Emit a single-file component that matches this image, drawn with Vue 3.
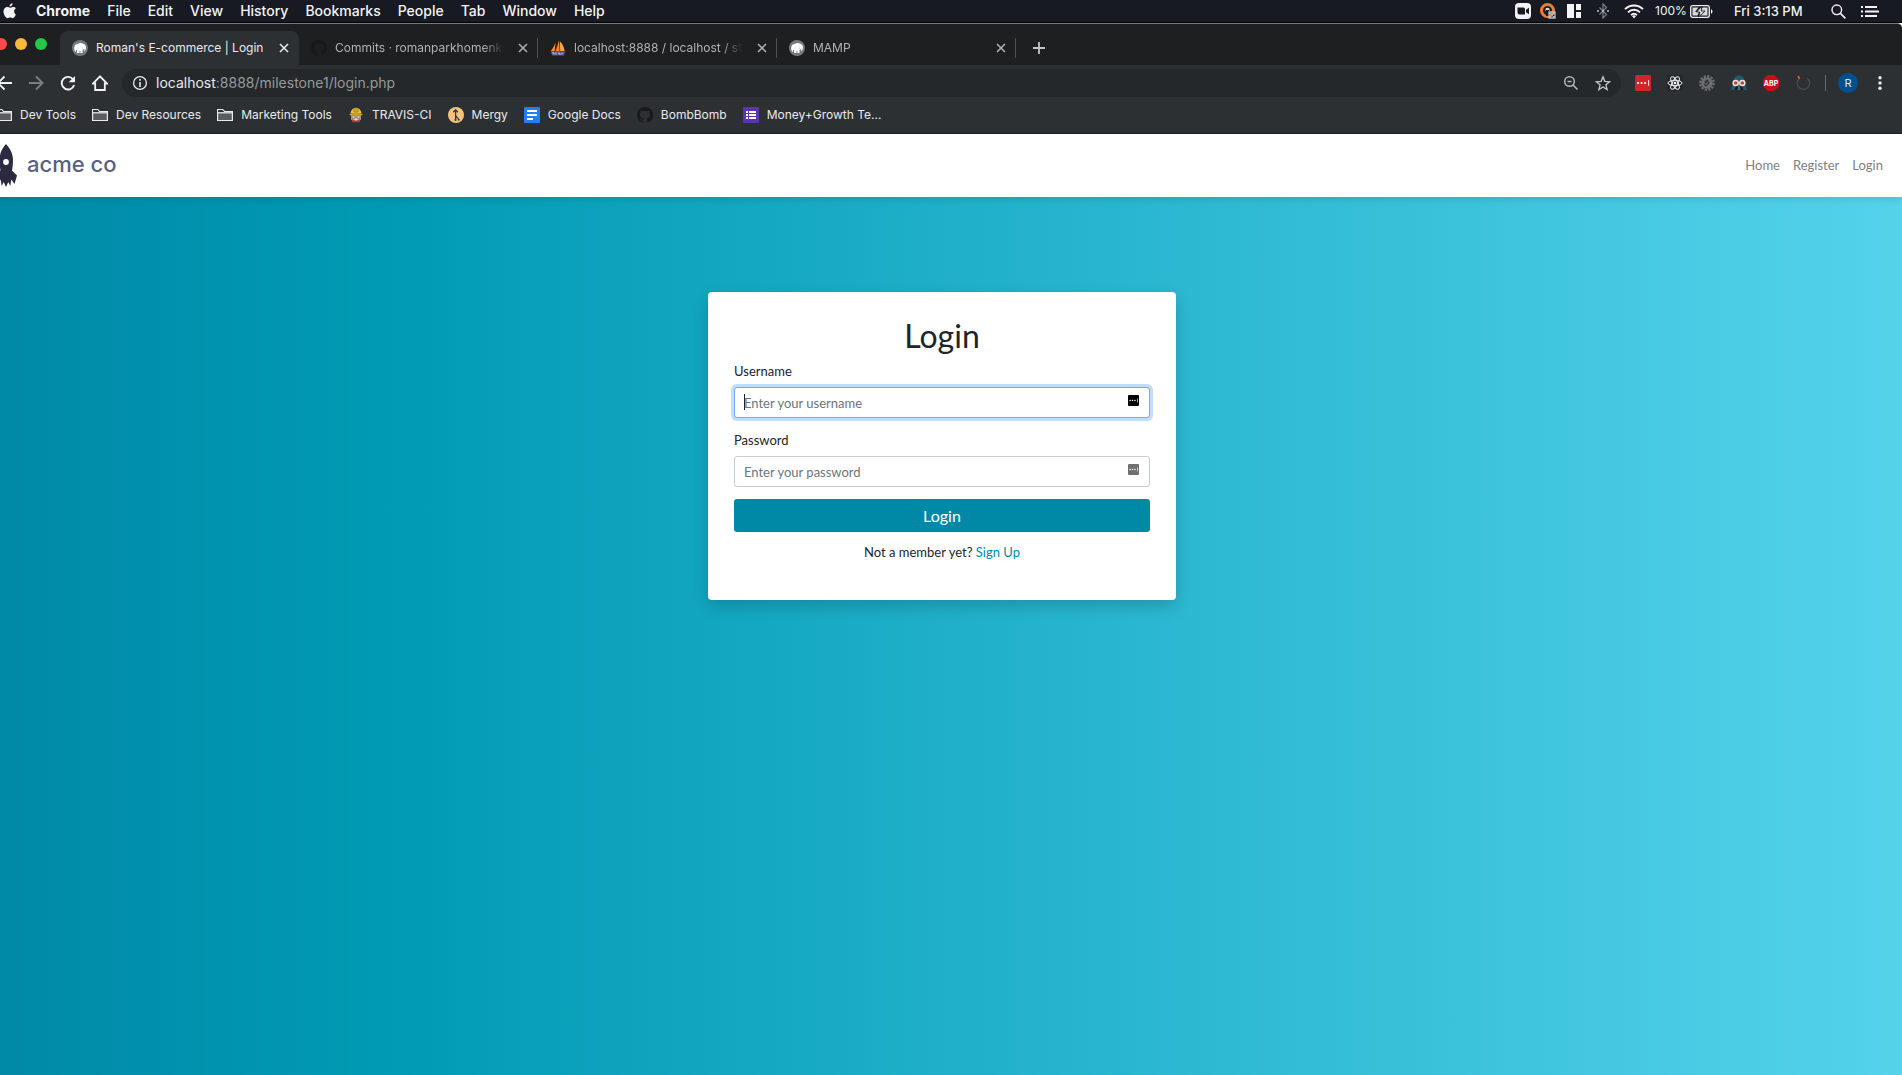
<script setup>
import { ref } from 'vue'

const menus = ['Chrome', 'File', 'Edit', 'View', 'History', 'Bookmarks', 'People', 'Tab', 'Window', 'Help']
const tabs = [
  { title: "Roman's E-commerce | Login", icon: 'mamp', active: true },
  { title: 'Commits · romanparkhomenko/', icon: 'github' },
  { title: 'localhost:8888 / localhost / store', icon: 'pma' },
  { title: 'MAMP', icon: 'mamp' },
]
const bookmarks = [
  { label: 'Dev Tools', icon: 'folder' },
  { label: 'Dev Resources', icon: 'folder' },
  { label: 'Marketing Tools', icon: 'folder' },
  { label: 'TRAVIS-CI', icon: 'travis' },
  { label: 'Mergy', icon: 'mergy' },
  { label: 'Google Docs', icon: 'docs' },
  { label: 'BombBomb', icon: 'github' },
  { label: 'Money+Growth Te...', icon: 'forms' },
]
const username = ref('')
const password = ref('')
</script>

<template>
  <svg class="defs" width="0" height="0" aria-hidden="true">
    <symbol id="i-mamp" viewBox="0 0 16 16">
      <circle cx="8" cy="8" r="8" fill="#77797b" />
      <path d="M2.200 8C2.300 5.200 4 3.700 6 3.900 7 3 9.500 2.800 11 3.700 13 4 14.200 6 13.900 8c-.2 1.700-.8 3-1.900 3.500.4-1 .5-2 .2-3-.5 1-1 1.300-1.700 1.300V13H8.400v-2.300H7.500V13H5.100V9.800c-.4.3-.8.3-1 0-.1 1 .1 1.800-.7 2.200C2.600 11 2.200 9.500 2.200 8z" fill="#fff" />
      <path d="M6.300 6.500c.2 1.400-.3 2.300-1 3M10 6.500c-.1 1 .2 2 1 2.600" fill="none" stroke="#b5b6b8" stroke-width=".5" />
    </symbol>
    <symbol id="i-github" viewBox="0 0 16 16">
      <path fill="#17191b" d="M8 0C3.580 0 0 3.580 0 8c0 3.540 2.290 6.530 5.470 7.590.4.070.55-.17.55-.38v-1.490c-2.010.37-2.530-.49-2.690-.94-.09-.23-.48-.94-.82-1.130-.28-.15-.68-.52-.01-.53.63-.01 1.080.58 1.230.82.72 1.210 1.870.87 2.330.66.070-.52.28-.87.51-1.070-1.780-.2-3.640-.89-3.640-3.950 0-.87.31-1.590.82-2.150-.08-.2-.36-1.020.08-2.120 0 0 .67-.21 2.200.82a7.600 7.600 0 014 0c1.530-1.040 2.200-.82 2.200-.82.44 1.100.16 1.920.08 2.120.51.56.82 1.270.82 2.150 0 3.070-1.870 3.750-3.650 3.950.29.25.54.73.54 1.480v2.200c0 .21.15.46.55.38A8.010 8.010 0 0016 8c0-4.420-3.580-8-8-8z" />
    </symbol>
    <symbol id="i-pma" viewBox="0 0 16 16">
      <path d="M5.500 2.500 4.700 11H.8C2.600 8.600 4.300 6 5.500 2.500z" fill="#f79433" />
      <path d="M8.800.5C8 4 6.500 8 5.500 11.500l4 .3C9.600 8 9.500 4 8.800.5z" fill="#f58220" />
      <path d="M9.800 1.300c2.800 2.500 4.500 6 4.700 9.700h-4.300z" fill="#f9a24b" />
      <path d="M.5 11.300h15L14 15.600H2.200z" fill="#55578a" />
      <path d="M2 12.800h2v1.600m2-2.200v2.500m2-1.400h2v1.600m2-2.300v1.900" stroke="#c2c4dc" fill="none" />
    </symbol>
    <symbol id="i-folder" viewBox="0 0 16 16">
      <path d="M.6 13.500v-11h5.100l1.800 2h7.900v9z" fill="#5a5d60" stroke="#e8eaed" stroke-width="1.200" />
      <path d="M1.200 3.100h4.200l1.600 2H1.200z" fill="#2d3033" />
      <path d="M.6 5.800h14.800" stroke="#e8eaed" stroke-width="1.200" />
    </symbol>
    <symbol id="i-travis" viewBox="0 0 16 16">
      <path d="M3 7h10v5l-2 3H5l-2-3z" fill="#c9a58d" />
      <path d="M4 8.800h3v2.400H4zM9 8.800h3v2.400H9z" fill="#eee" stroke="#6e6259" stroke-width=".8" />
      <path d="M2.500 6.500C3 2.800 5 .7 8 .7s5 2.100 5.500 5.800z" fill="#edc23d" />
      <path d="M6 1.500v3.500h4V1.500M8 1v3" stroke="#a87922" fill="none" />
      <path d="M1.300 6.900c4-1.300 9.400-1.300 13.400 0L14 8.200H2z" fill="#d09c30" />
      <path d="M4 12.300 8 14l4-1.700-.5 3h-7z" fill="#c52e36" />
      <path d="M6 11.700h4l-2 1.500z" fill="#eee" />
    </symbol>
    <symbol id="i-mergy" viewBox="0 0 16 16">
      <circle cx="8" cy="8" r="8" fill="#f5c37a" />
      <path d="M7.600 13V3M5.300 5.200 7.600 2.800l2.300 2.400M7.600 8c.2 2 2.600 2.600 3 4.700" fill="none" stroke="#263f5e" stroke-width="1.300" />
      <circle cx="7.500" cy="13" r="1.100" fill="#263f5e" /><circle cx="10.800" cy="12.800" r="1" fill="#263f5e" />
    </symbol>
    <symbol id="i-docs" viewBox="0 0 16 16">
      <rect width="16" height="16" rx="1" fill="#1f80f5" />
      <path d="M3 4h10M3 8h10M3 12h6" stroke="#fff" stroke-width="1.800" />
    </symbol>
    <symbol id="i-forms" viewBox="0 0 16 16">
      <rect width="16" height="16" rx="1" fill="#5a35b0" />
      <path d="M3 5h2m1 0h7M3 8h2m1 0h7M3 11h2m1 0h7" stroke="#fff" stroke-width="1.800" />
    </symbol>
    <symbol id="i-x" viewBox="0 0 16 16">
      <path d="m4 4 8 8m0-8-8 8" stroke="currentColor" stroke-width="1.500" />
    </symbol>
    <symbol id="i-pass" viewBox="0 0 16 16">
      <rect width="16" height="16" rx="1.500" fill="currentColor" />
      <path d="M2 8a1.100 1.100 0 102.200 0 1.100 1.100 0 10-2.200 0M5.500 8a1.100 1.100 0 102.200 0 1.100 1.100 0 10-2.200 0M9 8a1.100 1.100 0 102.200 0 1.100 1.100 0 10-2.200 0M13.200 5.200h.9v5.600h-.9z" fill="#fff" />
    </symbol>
  </svg>

  <div class="screen">
    <header class="menubar">
      <svg class="apple" width="14" height="16" viewBox="0 0 14 16"><path fill="#f2f2f3" d="M9.600.3c.1 1.800-1.300 3.400-3 3.300C6.400 1.900 8 .4 9.600.3zM12.900 11.500c-.8 1.800-1.800 3.700-3.200 3.700-1 0-1.300-.6-2.500-.6s-1.600.6-2.500.6C2.600 15.200.5 11.500.5 8.600c0-2.900 1.900-4.500 3.700-4.500 1.200 0 2.100.7 2.900.7.700 0 1.900-.8 3.300-.8 1 0 1.900.5 2.500 1.300-2.500 1.500-2.100 5.100 0 6.200z" /></svg>
      <nav class="menus">
        <span v-for="m in menus" :key="m" class="menu" :class="{ app: m === 'Chrome' }">{{ m }}</span>
      </nav>
      <div class="status">
        <svg width="16" height="16" viewBox="0 0 16 16"><rect width="16" height="16" rx="4" fill="#f2f3f5" /><path d="M2.500 4.500h6q1.500 0 1.500 1.500v5.500H4.500q-2 0-2-2zM11 6.800l3-2v6.500l-3-2z" fill="#171a22" /></svg>
        <svg width="16" height="16" viewBox="0 0 16 16"><circle cx="7.500" cy="7.500" r="6" fill="none" stroke="#ee7a36" stroke-width="3" /><circle cx="7.500" cy="7" r="2.200" fill="#f0d5c4" /><path d="M6 7h3v6H6z" fill="#171a22" /><path d="m9 9 6 6m0-6-6 6M9 9h6v6H9z" stroke="#b9bbc0" stroke-width="1.300" fill="none" /></svg>
        <svg class="tiles" width="14" height="14" viewBox="0 0 14 14"><path d="M0 0h7v14H0zM9 0h5v6H9zM9 8h5v6H9z" fill="#f2f3f5" /></svg>
        <svg class="bt" width="12" height="16" viewBox="0 0 12 16"><path d="m2.500 4.500 7 7L6 15V1l3.500 3.500-7 7" fill="none" stroke="#7d8087" stroke-width="1.200" /><path d="M0 8h2m3 0h2m3 0h2" stroke="#c3c5c9" stroke-width="1.500" /></svg>
        <svg class="wifi" width="20" height="15" viewBox="0 0 20 15"><path d="M1 5.200c5-5 13-5 18 0M4 8.300c3.500-3.500 8.500-3.500 12 0M7 11.200c1.800-1.800 4.200-1.800 6 0" fill="none" stroke="#f2f3f5" stroke-width="1.900" /><path d="m8 12 2 2.500 2-2.500q-2-1.500-4 0z" fill="#f2f3f5" /></svg>
        <span class="charge">100%</span>
        <svg class="battery" width="23" height="13" viewBox="0 0 23 13"><rect x=".7" y=".7" width="18.600" height="11.600" rx="2" fill="none" stroke="#f2f3f5" stroke-width="1.300" /><path d="M2.500 2.500h6L5 7h4l-1.500 3.500h-5zM17.500 10.500h-7L15 6h-4l1.500-3.500h5z" fill="#d8d9dc" /><path d="M12 1 6.500 7H10l-1.500 5L15 6h-4z" fill="#f2f3f5" stroke="#171a22" stroke-width=".9" /><path d="M21 4q3 2.500 0 5z" fill="#f2f3f5" /></svg>
        <time class="clock">Fri 3:13 PM</time>
        <svg class="find" width="15" height="15" viewBox="0 0 15 15"><circle cx="5.800" cy="5.800" r="4.800" fill="none" stroke="#f2f3f5" stroke-width="1.400" /><path d="m9.400 9.400 5 5" stroke="#f2f3f5" stroke-width="1.600" /></svg>
        <svg width="18" height="11" viewBox="0 0 18 11"><path d="M0 1h2M4 1h12M0 5.500h2m2 0h14M0 10h2m2 0h12" stroke="#f2f3f5" stroke-width="2" /></svg>
      </div>
    </header>

    <section class="browser">
      <div class="tabstrip">
        <div class="lights"><i class="red" /><i class="amber" /><i class="green" /></div>
        <div v-for="t in tabs" :key="t.title" class="tab" :class="{ active: t.active }">
          <svg width="16" height="16"><use :href="'#i-' + t.icon" /></svg>
          <span class="tab-title">{{ t.title }}</span>
          <button class="icon-btn" aria-label="Close tab"><svg width="16" height="16"><use href="#i-x" /></svg></button>
        </div>
        <button class="icon-btn plus" aria-label="New tab"><svg width="14" height="14" viewBox="0 0 14 14"><path d="M7 1v12M1 7h12" stroke="#c5c8cb" stroke-width="1.800" /></svg></button>
      </div>

      <div class="toolbar">
        <button class="icon-btn" aria-label="Back"><svg width="16" height="16" viewBox="0 0 16 16"><path d="M16 8H2m6.500-6.500L2 8l6.500 6.500" fill="none" stroke="#f1f3f4" stroke-width="1.900" /></svg></button>
        <button class="icon-btn" aria-label="Forward"><svg width="16" height="16" viewBox="0 0 16 16"><path d="M1 8h13M8 1.500 14.500 8 8 14.500" fill="none" stroke="#7b7e81" stroke-width="1.900" /></svg></button>
        <button class="icon-btn" aria-label="Reload"><svg width="16" height="16" viewBox="0 0 16 16"><path d="M13.300 4.700A6.300 6.300 0 1 0 14.100 10" fill="none" stroke="#f1f3f4" stroke-width="1.900" /><path d="M15 1v6.300H8.700z" fill="#f1f3f4" /></svg></button>
        <button class="icon-btn" aria-label="Home"><svg width="16" height="16" viewBox="0 0 16 16"><path d="M8 1.300.9 8.500h2.300V15h9.600V8.500h2.300z" fill="none" stroke="#f1f3f4" stroke-width="1.800" /></svg></button>
        <div class="address">
          <svg width="16" height="16" viewBox="0 0 16 16"><circle cx="8" cy="8" r="6.400" fill="none" stroke="#e8eaed" stroke-width="1.300" /><path d="M8 7v5M8 4v1.700" stroke="#e8eaed" stroke-width="1.600" /></svg>
          <span class="url"><b>localhost</b>:8888/milestone1/login.php</span>
          <svg width="16" height="16" viewBox="0 0 16 16"><circle cx="6.500" cy="6.500" r="4.800" fill="none" stroke="#b4b7ba" stroke-width="1.500" /><path d="m10 10 4.500 4.500M4.500 6.500h4" stroke="#b4b7ba" stroke-width="1.500" /></svg>
          <svg width="16" height="16" viewBox="0 0 16 16"><path d="m8 1.800 1.800 4.500 4.800.4-3.700 3.100 1.200 4.700L8 12l-4.100 2.500 1.200-4.700L1.400 6.700l4.800-.4z" fill="none" stroke="#c5c8ca" stroke-width="1.300" /></svg>
        </div>
        <div class="extensions">
          <svg class="lp" width="16" height="16"><use href="#i-pass" /></svg>
          <svg width="16" height="16" viewBox="0 0 16 16"><rect width="16" height="16" rx="2" fill="#25282a" /><g fill="none" stroke="#f0f1f2"><ellipse cx="8" cy="8" rx="7" ry="2.700" /><ellipse cx="8" cy="8" rx="7" ry="2.700" transform="rotate(60 8 8)" /><ellipse cx="8" cy="8" rx="7" ry="2.700" transform="rotate(120 8 8)" /></g><circle cx="8" cy="8" r="1.300" fill="#fff" /></svg>
          <svg width="16" height="16" viewBox="0 0 16 16"><circle cx="8" cy="8" r="6.700" fill="none" stroke="#6c6e70" stroke-width="2.400" stroke-dasharray="2.200 1.308" /><circle cx="8" cy="8" r="5.700" fill="#6c6e70" /><path d="m6 7 2-2 1 1-2 2zm1 4 3-3-1-1M5 9l2 2" fill="none" stroke="#303336" stroke-width="1.200" /></svg>
          <svg width="16" height="16" viewBox="0 0 16 16"><path d="M2.500 6Q3 .5 8 .5T13.500 6l2.500 9H0z" fill="#245b6c" /><path d="M5 11h6l1.500 4h-9z" fill="#121d22" /><path d="M7 11h2l.5 4h-3z" fill="#4b6975" /><circle cx="4.700" cy="8" r="2.500" fill="#b8433f" stroke="#f2ded6" stroke-width="1.500" /><circle cx="11.300" cy="8" r="2.500" fill="#b8433f" stroke="#f2ded6" stroke-width="1.500" /></svg>
          <svg width="16" height="16" viewBox="0 0 16 16"><path d="M4.700 0h6.600L16 4.700v6.600L11.300 16H4.700L0 11.300V4.700z" fill="#ca0c16" /><text x="8" y="10.500" text-anchor="middle" class="abp">ABP</text></svg>
          <svg width="16" height="16" viewBox="0 0 16 16"><path d="M5 3a6.200 6.200 0 1 0 7 0" fill="none" stroke="#47494b" stroke-width="1.500" /><path d="m3 1 1.500 2.800" stroke="#d76229" stroke-width="1.600" /></svg>
        </div>
        <span class="divider" />
        <button class="avatar" aria-label="Profile">R</button>
        <button class="icon-btn more" aria-label="Menu"><svg width="16" height="16" viewBox="0 0 16 16"><g fill="#e8eaed"><circle cx="8" cy="2.700" r="1.700" /><circle cx="8" cy="8" r="1.700" /><circle cx="8" cy="13.300" r="1.700" /></g></svg></button>
      </div>

      <nav class="bookmarks">
        <a v-for="b in bookmarks" :key="b.label" href="#" class="bookmark">
          <svg width="16" height="16"><use :href="'#i-' + b.icon" /></svg>{{ b.label }}
        </a>
      </nav>
    </section>

    <main class="site">
      <header class="navbar">
        <a href="#" class="brand">
          <svg width="24" height="43" viewBox="0 0 24 43"><path d="M12 0C8 4.500 5.500 9.500 5.500 16c0 4 .5 7.500 1 10.500L1 31.500 3.500 40l3.200-4.500 1 6.500 2-4L12 43l2.300-5 2 4 1-6.500 3.200 4.500L23 31.500l-5-5c.6-3 1-6.500 1-10.500C19 9.500 16 4.500 12 0z" fill="#2b2a41" /><circle cx="12" cy="18" r="2.900" fill="#fff" /></svg>
          <span>acme co</span>
        </a>
        <nav class="links"><a href="#">Home</a><a href="#">Register</a><a href="#">Login</a></nav>
      </header>

      <form class="card" @submit.prevent>
        <h1>Login</h1>
        <label for="username">Username</label>
        <div class="field focused">
          <input id="username" v-model="username" type="text" placeholder="Enter your username">
          <svg class="pass" width="11" height="11"><use href="#i-pass" /></svg>
        </div>
        <label for="password">Password</label>
        <div class="field">
          <input id="password" v-model="password" type="password" placeholder="Enter your password">
          <svg class="pass" width="11" height="11"><use href="#i-pass" /></svg>
        </div>
        <button class="submit" type="submit">Login</button>
        <p>Not a member yet? <a href="#">Sign Up</a></p>
      </form>
    </main>
  </div>
</template>

<style>
body { margin: 0; overflow: hidden; }
</style>

<style scoped>
* { box-sizing: border-box; }
svg { display: block; flex: none; }
button { font: inherit; border: 0; padding: 0; background: none; }
a { text-decoration: none; }
.defs { position: absolute; }

/* the desktop runs slightly past the left edge of the window */
.screen {
  display: flex;
  flex-direction: column;
  min-height: 100vh;
  margin-left: -18px;
  font-family: Inter, "Liberation Sans", sans-serif;
}

.menubar {
  display: flex;
  align-items: center;
  height: 23px;
  padding: 0 23px 0 21px;
  border-bottom: 1px solid #000;
  background: #171a22;
  color: #f2f3f5;
  font-size: 13px;
  font-weight: 500;
  line-height: 22px;
  white-space: nowrap;
}
.menus { display: flex; flex: 1; gap: 17px; margin-left: 19px; font-size: 14px; }
.menu.app { font-weight: 700; }
.status { display: flex; align-items: center; }
.status svg { margin-right: 9px; }
.status .tiles { margin: 0 16px 0 2px; }
.status .bt { margin-right: 15px; }
.status .wifi { margin-right: 11px; }
.charge { width: 35px; font-size: 12px; font-weight: 400; }
.status .battery { margin-right: 21px; }
.clock { width: 97px; }
.status .find { margin-right: 15px; }
.status svg:last-child { margin-right: 0; }

.browser {
  border-top: 1px solid #77797b;
  border-bottom: 1px solid #1f2123;
  border-top-right-radius: 5px;
  background: #2d3033;
  color: #e8eaed;
  font-size: 12px;
}
.icon-btn { display: flex; align-items: center; justify-content: center; width: 16px; height: 16px; flex: none; color: inherit; }

.tabstrip {
  display: flex;
  align-items: flex-end;
  height: 41px;
  border-top-right-radius: 5px;
  background: #1e1f20;
}
.lights { display: flex; gap: 8px; flex: none; width: 78px; height: 34px; padding: 7px 0 0 13px; }
.lights i { width: 12px; height: 12px; border-radius: 50%; }
.red { background: #fc4a4a; }
.amber { background: #fdb53c; }
.green { background: #24c748; }
.tab {
  position: relative;
  display: flex;
  align-items: center;
  gap: 8px;
  flex: 0 1 239px;
  min-width: 0;
  height: 34px;
  padding: 0 7px 0 12px;
  color: #b0b3b6;
}
.tab.active { border-radius: 8px 8px 0 0; background: #2d3033; color: #e8eaed; }
.tab:not(.active)::after {
  content: "";
  position: absolute;
  right: 0;
  top: 7px;
  width: 1px;
  height: 20px;
  background: #4d4f51;
}
.tab-title {
  flex: 1;
  min-width: 0;
  overflow: hidden;
  white-space: nowrap;
  line-height: 18px;
  mask-image: linear-gradient(to right, #000 86%, transparent 98%);
}
.tab.active .tab-title { mask-image: none; }
.plus { width: 30px; height: 34px; margin-left: 8px; }

.toolbar { display: flex; align-items: center; gap: 16px; height: 36px; padding: 0 14px; }
.address {
  display: flex;
  align-items: center;
  gap: 16px;
  flex: 1;
  height: 28px;
  margin-left: -2px;
  padding: 0 10px;
  border-radius: 14px;
  background: #25282a;
}
.url { flex: 1; margin-left: -8px; color: #96999c; font-size: 14px; line-height: 18px; }
.url b { color: #e8eaed; font-weight: 400; }
.extensions { display: flex; gap: 16px; margin-left: -2px; }
.lp { color: #d32426; }
.abp { fill: #fff; font-size: 7px; font-weight: 700; }
.divider { width: 1px; height: 16px; margin: 0 -4px 0 -2px; background: #66696b; }
.avatar { width: 20px; height: 20px; border-radius: 50%; background: #00508f; color: #d9e5ee; font-size: 11px; }
.more { margin-left: -2px; }

.bookmarks { display: flex; align-items: center; gap: 16px; height: 32px; padding: 0 14px 5px; white-space: nowrap; }
.bookmark { display: flex; align-items: center; gap: 8px; color: #e8eaed; }

.site {
  flex: 1;
  background: linear-gradient(to right, #0089a7, #009ab5 21%, #54d3eb);
  color: #212529;
  font-family: Lato, "Liberation Sans", sans-serif;
  font-size: 13px;
  line-height: 20px;
}
.navbar {
  display: flex;
  align-items: center;
  justify-content: space-between;
  height: 63px;
  padding: 0 19px 0 12px;
  background: #fff;
  box-shadow: 0 2px 8px rgba(0, 0, 0, .12);
}
.brand { display: flex; align-items: center; gap: 9px; color: #5a5e80; font-family: Inter, sans-serif; font-size: 22px; font-weight: 500; }
.brand span { padding-bottom: 4px; }
.links { display: flex; gap: 13px; padding-bottom: 2px; }
.links a { color: #7f7f7f; }

.card {
  width: 468px;
  max-width: 100%;
  margin: 95px auto 0;
  padding: 25px 26px 38px;
  border-radius: 4px;
  background: #fff;
  box-shadow: 0 6px 16px rgba(0, 0, 0, .18);
}
h1 { margin: 0 0 6px; font-size: 32px; font-weight: 400; line-height: 38px; text-align: center; }
label { display: block; margin-bottom: 6px; }
.field { position: relative; margin-bottom: 12px; }
.field input {
  display: block;
  width: 100%;
  height: 31px;
  padding: 0 32px 0 9px;
  border: 1px solid #c5ccd4;
  border-radius: 3px;
  outline: 0;
  background: #fff;
  color: #495057;
  font: inherit;
}
.field input::placeholder { color: #6c757d; opacity: 1; }
.field.focused input { border-color: #67aefa; box-shadow: 0 0 0 3px #c2dcfb; }
.field.focused::before {
  content: "";
  position: absolute;
  left: 10px;
  top: 7px;
  width: 1px;
  height: 16px;
  background: #212529;
}
.pass { position: absolute; right: 11px; top: 8px; color: #707070; }
.focused .pass { color: #000; }
.submit { display: block; width: 100%; height: 33px; border-radius: 3px; background: #0089a7; color: #fff; font-size: 16px; }
p { margin: 10px 0 0; text-align: center; }
p a { color: #0089a7; }
</style>
